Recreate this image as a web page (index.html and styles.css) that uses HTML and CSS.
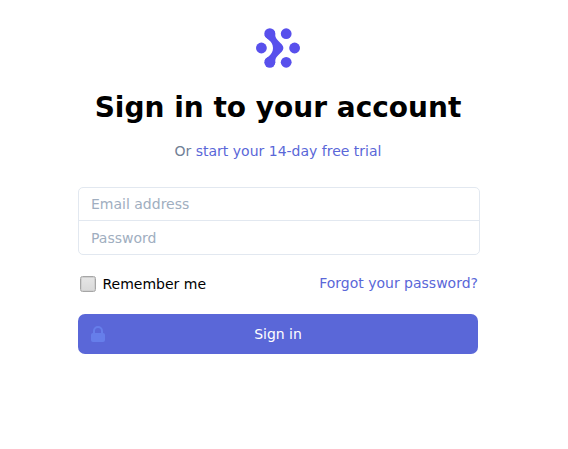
FILE: index.html
```html
<!DOCTYPE html>
<html lang="en">
<head>
<meta charset="utf-8">
<title>Sign in</title>
<link rel="stylesheet" href="styles.css">
</head>
<body>
<main class="login">
  <svg class="logo" viewBox="0 0 44 40" aria-hidden="true">
    <g fill="#5850ec">
      <path d="M8.6 7.4C10.2 11.2 17 12.5 17 20S10.2 28.8 8.6 32.6L18.6 36.8C19.4 35 19 33.4 19.5 31.3C20.4 27.8 26 24.5 27 21.8Q27.8 20 27 18.2C26 15.5 20.4 12.2 19.5 8.7C19 6.6 19.4 5 18.6 3.2Z"/>
      <circle cx="13.8" cy="5.7" r="5.5"/><circle cx="30.2" cy="5.7" r="5.4"/><circle cx="5.4" cy="20" r="5.4"/><circle cx="38.6" cy="20" r="5.4"/><circle cx="13.8" cy="34.3" r="5.5"/><circle cx="30.2" cy="34.3" r="5.4"/>
    </g>
  </svg>
  <h1 class="title">Sign in to your account</h1>
  <p class="subtitle">Or <a class="link" href="#">start your 14-day free trial</a></p>
  <form class="form">
    <div class="fields">
      <input class="field" type="email" placeholder="Email address" aria-label="Email address">
      <input class="field" type="password" placeholder="Password" aria-label="Password">
    </div>
    <div class="options">
      <label class="remember"><input class="check" type="checkbox"><span class="remember-text">Remember me</span></label>
      <a class="link" href="#">Forgot your password?</a>
    </div>
    <button class="submit" type="button">
      <svg class="lock" viewBox="0 0 20 20" aria-hidden="true"><path fill="currentColor" fill-rule="evenodd" d="M5 9V7a5 5 0 0110 0v2a2 2 0 012 2v5a2 2 0 01-2 2H5a2 2 0 01-2-2v-5a2 2 0 012-2zm8-2v2H7V7a3 3 0 016 0z"/></svg>
      <span>Sign in</span>
    </button>
  </form>
</main>
</body>
</html>
```
FILE: styles.css
```css
* { box-sizing: border-box; }
body { margin: 0; background: #fff; color: #000; font: 14px/20px "DejaVu Sans", sans-serif; }
.login { width: 400px; margin: 28px 0 0 78px; }
.logo { display: block; width: 44px; height: 40px; margin: 0 auto; }
.title { margin: 22px 0 0; font-size: 28px; line-height: 36px; font-weight: 700; text-align: center; white-space: nowrap; }
.subtitle { margin: 15px 0 0; text-align: center; color: #718096; }
.link { color: #5a67d8; text-decoration: none; }
.fields { width: 402px; margin-top: 26px; border: 1px solid #e2e8f0; border-radius: 5px; }
.field { display: block; width: 100%; height: 32px; padding: 0 12px; border: 0; background: transparent; font: inherit; }
.field + .field { height: 34px; border-top: 1px solid #e2e8f0; }
.field::placeholder { color: #a0aec0; opacity: 1; }
.options { display: flex; justify-content: space-between; margin-top: 18px; }
.remember { display: flex; }
.remember-text { margin: 1px 0 0 6.5px; }
.check { appearance: none; width: 16px; height: 16px; margin: 3px 0 0 2px; border: 1px solid #a6a6a6; border-radius: 2.5px; background: linear-gradient(#e6e6e6, #d9d9d9); box-shadow: inset 0 0 0 1px #d0d0d0; }
.submit { position: relative; width: 100%; height: 40px; margin-top: 20px; padding: 0; border: 0; border-radius: 7px; background: #5a67d8; color: #fff; font: inherit; }
.lock { position: absolute; left: 10px; top: 10px; width: 20px; height: 20px; color: #667eea; }
```
